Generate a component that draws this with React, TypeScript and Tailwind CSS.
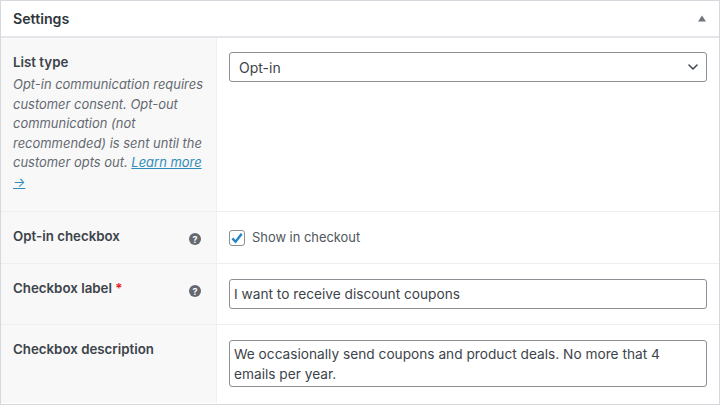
import { ChevronDown } from 'lucide-react'

const font = { fontFamily: 'Inter, "Noto Sans", sans-serif' }

function HelpTip() {
  return (
    <span className="flex h-[12px] w-[12px] items-center justify-center rounded-full bg-[#646970] text-[9px] font-bold leading-none text-white">
      ?
    </span>
  )
}

function Row({
  label,
  required,
  help,
  desc,
  className,
  children,
}: {
  label: string
  required?: boolean
  help?: boolean
  desc?: React.ReactNode
  className: string
  children: React.ReactNode
}) {
  return (
    <div className={'flex border-b border-[#eeeeee] last:border-b-0 ' + className}>
      <div className="w-[216px] shrink-0 border-r border-[#f0f0f0] bg-[#f8f8f8] pl-[12px] pr-[8px] pt-[15px]">
        <div className="flex justify-between">
          <span className="text-[13.3px] font-semibold leading-[18px] text-[#3c434a]">
            {label}
            {required && <span className="text-[#e02020]"> *</span>}
          </span>
          {help && (
            <span className="mt-[6px] mr-[7px]">
              <HelpTip />
            </span>
          )}
        </div>
        {desc && <p className="mt-[4px] text-[12.95px] italic leading-[19.5px] text-[#646970]">{desc}</p>}
      </div>
      <div className="min-w-0 flex-1 pl-[12px] pr-[12px]">{children}</div>
    </div>
  )
}

export default function App() {
  return (
    <div className="h-[405px] w-[720px] overflow-hidden bg-white" style={font}>
      <div className="h-[405px] border border-[#d5d8dc]">
        <div className="flex h-[37px] items-center justify-between border-b-2 border-[#e4e6e9] pl-[12px] pr-[12px]">
          <span className="text-[14.2px] font-semibold text-[#2f363c]">Settings</span>
          <svg width="10" height="7" viewBox="0 0 10 7">
            <path d="M5 0.5 L9 6.5 L1 6.5 Z" fill="#70757a" />
          </svg>
        </div>

        <Row
          label="List type"
          className="h-[174px]"
          desc={
            <>
              Opt-in communication requires customer consent. Opt-out communication (not recommended) is sent until the
              customer opts out.{' '}
              <a className="text-[#2f8cba] underline">
                Learn more
                <br />→
              </a>
            </>
          }
        >
          <div className="mt-[14px] flex h-[30px] items-center justify-between rounded-[3px] border border-[#8c8f94] bg-white pl-[9px] pr-[5px] text-[14px] text-[#3c434a]">
            <span>Opt-in</span>
            <ChevronDown size={16} strokeWidth={2.25} className="text-[#3c434a]" />
          </div>
        </Row>

        <Row label="Opt-in checkbox" help className="h-[52px]">
          <div className="mt-[17px] flex items-center gap-[7px]">
            <span className="flex h-[16px] w-[16px] items-center justify-center rounded-[3px] border border-[#8c8f94] bg-white">
              <svg width="14" height="14" viewBox="0 0 13 13" fill="none">
                <path d="M2.2 6.8 L5.2 10 L10.9 2.6" stroke="#2384c6" strokeWidth="2.2" />
              </svg>
            </span>
            <span className="text-[12.9px] leading-[18px] text-[#50575e]">Show in checkout</span>
          </div>
        </Row>

        <Row label="Checkbox label" required help className="h-[61px]">
          <div className="mt-[15px] flex h-[30px] items-center rounded-[3px] border border-[#8c8f94] bg-white pl-[4px] text-[13.7px] text-[#3c434a]">
            I want to receive discount coupons
          </div>
        </Row>

        <Row label="Checkbox description" className="h-[78px]">
          <div className="mt-[15px] h-[47px] rounded-[3px] border border-[#8c8f94] bg-white pl-[4px] pr-[5px] pt-[3px] text-[13.7px] leading-[20px] text-[#3c434a]">
            We occasionally send coupons and product deals. No more that 4 emails per year.
          </div>
        </Row>
      </div>
    </div>
  )
}
